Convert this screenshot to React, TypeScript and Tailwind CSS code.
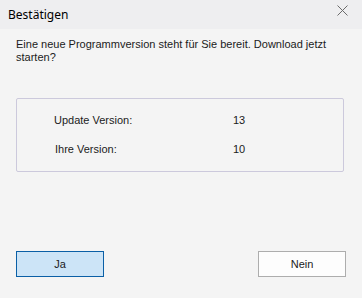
import React from 'react'

const rows = [
  { label: 'Update Version:', value: '13', pad: 'pl-[37px]' },
  { label: 'Ihre Version:', value: '10', pad: 'pl-[38px]' },
]

export default function App() {
  return (
    <div className="w-[362px] h-[298px] flex flex-col bg-[#f4f4f4] text-[#1b1b1b] overflow-hidden" style={{ fontFamily: '"Liberation Sans", Arial, sans-serif' }}>
      <div className="h-[29px] shrink-0 flex items-center justify-between bg-[#eeeef0] pl-2 pr-[14px]">
        <span className="text-[12px] text-black" style={{ fontFamily: '"Noto Sans", "Open Sans", sans-serif' }}>Bestätigen</span>
        <svg width="11" height="11" viewBox="0 0 11 11" className="-mt-[9px]">
          <path d="M0.5 0.5 L10.5 10.5 M10.5 0.5 L0.5 10.5" stroke="#6b6b6b" strokeWidth="1" fill="none" />
        </svg>
      </div>

      <div className="flex flex-col px-4 pt-[9px]">
        <p className="text-[11px] leading-[13px] w-[310px]">
          Eine neue Programmversion steht für Sie bereit. Download jetzt starten?
        </p>

        <div className="mt-[34px] h-[74px] w-[328px] rounded-[2px] border border-[#ccc9dc] flex flex-col pt-[15px] gap-[16px]">
          {rows.map((r, i) => (
            <div key={r.label} className={`flex items-center text-[11px] leading-[13px] ${r.pad}`}>
              <span className={i === 0 ? 'w-[179px]' : 'w-[178px]'}>{r.label}</span>
              <span>{r.value}</span>
            </div>
          ))}
        </div>

        <div className="mt-[79px] flex justify-between w-[330px]">
          <button className="w-[88px] h-[26px] border border-[#0a5fa6] bg-[#cce4f7] text-[11px]">Ja</button>
          <button className="w-[88px] h-[26px] border border-[#adadad] bg-[#fdfdfd] text-[11px]">Nein</button>
        </div>
      </div>
    </div>
  )
}
